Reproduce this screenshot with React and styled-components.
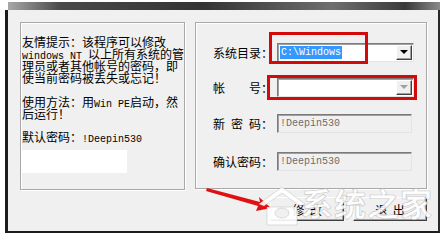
import React from 'react'
import styled, { createGlobalStyle } from 'styled-components'

const GlobalStyle = createGlobalStyle`
    html, body {
        margin: 0;
        padding: 0;
        background: #fff;
    }
`

const cjk = `"Noto Sans CJK SC", "Noto Sans", sans-serif`

const Screen = styled.div`
    position: relative;
    width: 441px;
    height: 235px;
    overflow: hidden;
    background: #fff;
    font-family: ${cjk};
    font-size: 12px;
    color: #000;
`

const Frame = styled.div`
    margin: 2px 0 0 5px;
    width: 435px;
    height: 231px;
    display: flex;
    flex-direction: column;
`

const TitleStrip = styled.div`
    height: 8px;
    margin-left: 3px;
    background: linear-gradient(to right, #a8a8a8, #4a4a4a 12%, #333 45%, #6e6e6e 75%, #3a3a3a 92%, #8a8a8a);
`

const Body = styled.div`
    flex: 1;
    background: #f0f0f0;
    border-left: 3px solid #1c1c1c;
    border-right: 2px solid #2a2a2a;
    border-bottom: 2px solid #1c1c1c;
    padding: 12px 11px 0 12px;
    display: flex;
    flex-direction: column;
`

const Groups = styled.div`
    display: flex;
    gap: 10px;
`

const GroupBox = styled.div`
    box-sizing: border-box;
    width: ${p => p.$w}px;
    height: ${p => p.$h}px;
    border: 1px solid #a9a9a9;
    box-shadow: inset 1px 1px 0 #fff, 1px 1px 0 #fff;
`

const HintText = styled.div`
    padding: 13px 0 0 1px;
    line-height: 12px;
    white-space: nowrap;
`

const Line = styled.div`
    height: 12px;
    margin-top: ${p => p.$gap || 0}px;
`

const Lat = styled.span`
    font-family: "Liberation Mono", "DejaVu Sans Mono", monospace;
    font-size: 10px;
    white-space: pre;
`

const Blank = styled.div`
    width: 105px;
    height: 23px;
    margin-top: 7px;
    background: #fff;
`

const Form = styled.div`
    padding: 19px 0 0 17px;
    display: flex;
    flex-direction: column;
`

const Row = styled.div`
    display: flex;
    align-items: center;
    height: 20px;
    margin-top: ${p => p.$gap || 0}px;
    white-space: nowrap;
`

const Label = styled.div`
    width: 64px;
`

const Field = styled.div`
    box-sizing: border-box;
    width: ${p => p.$w}px;
    height: 19px;
    display: flex;
    align-items: center;
    padding-left: 2px;
    background: ${p => (p.$disabled ? '#f0f0f0' : '#fff')};
    border-top: 1px solid #7a7a7a;
    border-left: 1px solid #7a7a7a;
    border-right: 1px solid #e4e4e4;
    border-bottom: 1px solid #e4e4e4;
    box-shadow: inset 1px 1px 0 #a0a0a0;
`

const Selected = styled.span`
    display: inline-block;
    height: 13px;
    line-height: 13px;
    padding: 0 1px;
    background: #3399ff;
    color: #fff;
    font-family: "Liberation Mono", "DejaVu Sans Mono", monospace;
    font-size: 10px;
`

const FieldText = styled.span`
    color: #6d6d6d;
    font-family: "Liberation Mono", "DejaVu Sans Mono", monospace;
    font-size: 10px;
`

const DropButton = styled.div`
    margin-left: auto;
    margin-right: 1px;
    box-sizing: border-box;
    width: 16px;
    height: 15px;
    background: #f0f0f0;
    border-top: 1px solid #fff;
    border-left: 1px solid #fff;
    border-right: 1px solid #404040;
    border-bottom: 1px solid #404040;
    box-shadow: inset -1px -1px 0 #a0a0a0;
    display: flex;
    align-items: center;
    justify-content: center;
    &::after {
        content: '';
        border-left: 4px solid transparent;
        border-right: 4px solid transparent;
        border-top: 4px solid ${p => (p.$disabled ? '#a0a0a0' : '#000')};
    }
`

const Buttons = styled.div`
    display: flex;
    justify-content: flex-end;
    gap: 9px;
    margin-top: 7px;
`

const Button = styled.div`
    box-sizing: border-box;
    width: 74px;
    height: 24px;
    display: flex;
    align-items: center;
    justify-content: center;
    background: #f0f0f0;
    border-top: 1px solid #fff;
    border-left: 1px solid #fff;
    border-right: 1px solid #404040;
    border-bottom: 1px solid #404040;
    box-shadow: inset -1px -1px 0 #a0a0a0;
    white-space: pre;
`

const Mark = styled.div`
    position: absolute;
    left: ${p => p.$x}px;
    top: ${p => p.$y}px;
    width: ${p => p.$w}px;
    height: ${p => p.$h}px;
    box-sizing: border-box;
    border: 3px solid #d40a0a;
    pointer-events: none;
`

const Overlay = styled.svg`
    position: absolute;
    left: 0;
    top: 0;
    pointer-events: none;
`

const Watermark = styled.div`
    position: absolute;
    left: 301px;
    top: 184px;
    font-family: ${cjk};
    font-size: 32px;
    font-weight: 700;
    letter-spacing: 1px;
    color: rgba(255, 255, 255, 0.9);
    -webkit-text-stroke: 0.6px rgba(150, 150, 150, 0.55);
    line-height: 36px;
    pointer-events: none;
`

export default function App() {
    return (
        <Screen>
            <GlobalStyle />
            <Frame>
                <TitleStrip />
                <Body>
                    <Groups>
                        <GroupBox $w={165} $h={168}>
                            <HintText>
                                <Line>友情提示：该程序可以修改</Line>
                                <Line><Lat>windows NT </Lat>以上所有系统的管</Line>
                                <Line>理员或者其他帐号的密码，即</Line>
                                <Line>使当前密码被丢失或忘记！</Line>
                                <Line $gap={12}>使用方法：用<Lat>Win PE</Lat>启动，然</Line>
                                <Line>后运行！</Line>
                                <Line $gap={11}>默认密码：<Lat>!Deepin530</Lat></Line>
                                <Blank />
                            </HintText>
                        </GroupBox>
                        <GroupBox $w={232} $h={167}>
                            <Form>
                                <Row>
                                    <Label>系统目录：</Label>
                                    <Field $w={137}>
                                        <Selected>C:\Windows</Selected>
                                        <DropButton />
                                    </Field>
                                </Row>
                                <Row $gap={15}>
                                    <Label>帐　　号：</Label>
                                    <Field $w={137}>
                                        <DropButton $disabled />
                                    </Field>
                                </Row>
                                <Row $gap={16}>
                                    <Label>新<Lat> </Lat>密<Lat> </Lat>码：</Label>
                                    <Field $w={135} $disabled>
                                        <FieldText>!Deepin530</FieldText>
                                    </Field>
                                </Row>
                                <Row $gap={18}>
                                    <Label>确认密码：</Label>
                                    <Field $w={135} $disabled>
                                        <FieldText>!Deepin530</FieldText>
                                    </Field>
                                </Row>
                            </Form>
                        </GroupBox>
                    </Groups>
                    <Buttons>
                        <Button>修  改</Button>
                        <Button>退  出</Button>
                    </Buttons>
                </Body>
            </Frame>

            <Mark $x={269} $y={32} $w={99} $h={32} />
            <Mark $x={267} $y={75} $w={150} $h={25} />

            <Overlay width="441" height="235" viewBox="0 0 441 235">
                <polygon
                    points="207,188 260,202 259,197 271,208 256,211 258,206 206,191"
                    fill="#e01010"
                />
                <g fill="rgba(255,255,255,0.9)" stroke="rgba(160,160,160,0.55)" strokeWidth="0.6">
                    <polygon points="282,187 305,204 300,206 282,193 264,206 259,204" />
                    <path d="M267 207 h30 v18 h-30 z M275 213 a7 5 0 1 0 14 0 a7 5 0 1 0 -14 0 z" fillRule="evenodd" />
                </g>
            </Overlay>
            <Watermark>系统之家</Watermark>
        </Screen>
    )
}
